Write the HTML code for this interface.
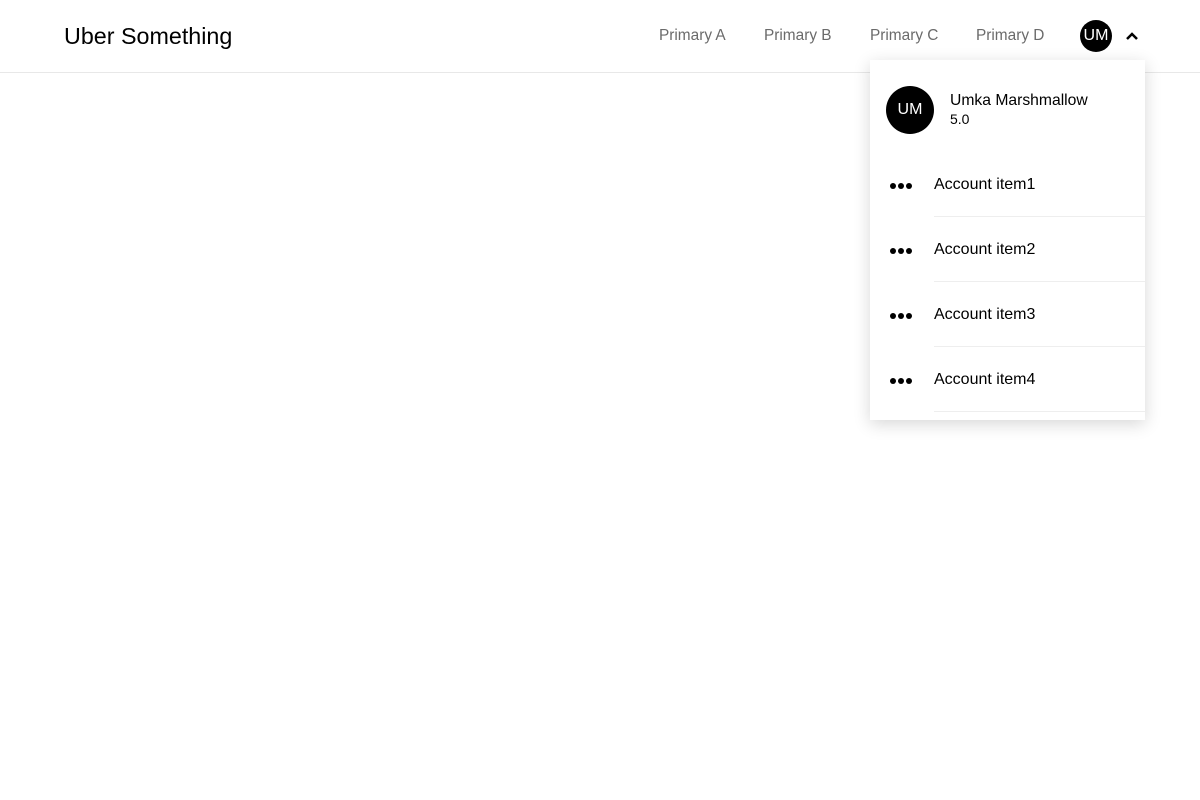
<!DOCTYPE html>
<html><head><style>
*{margin:0;padding:0;box-sizing:border-box}
body{width:1200px;height:800px;background:#fff;font-family:"Liberation Sans",sans-serif;position:relative;overflow:hidden;color:#000}
.hdr{position:absolute;left:0;top:0;width:1200px;height:73px;border-bottom:1px solid #e8e8e8}
.logo{position:absolute;left:64px;top:22px;font-size:23.3px;line-height:28px}
.nav{position:absolute;top:27px;font-size:15.4px;color:#6b6b6b;line-height:18px}
.av{position:absolute;background:#000;color:#fff;border-radius:50%;display:flex;align-items:center;justify-content:center}
.dd{position:absolute;left:870px;top:60px;width:275px;height:360px;background:#fff;box-shadow:0 4px 16px rgba(0,0,0,.16)}
.name{position:absolute;left:80px;top:32px;font-size:15.7px;line-height:18px}
.rate{position:absolute;left:80px;top:51px;font-size:14px;line-height:16px}
.item{position:absolute;left:0;width:275px;height:65px}
.item .t{position:absolute;left:64px;top:24px;font-size:16px;line-height:18px}
.item .ln{position:absolute;left:64px;right:0;bottom:0;height:1px;background:#eee}
.dots{position:absolute;left:20px;top:31px;display:flex;gap:2px}
.dots i{width:6px;height:6px;border-radius:50%;background:#000;display:block}
</style></head><body>
<div class="hdr">
<div class="logo">Uber Something</div>
<div class="nav" style="left:659px">Primary A</div>
<div class="nav" style="left:764px">Primary B</div>
<div class="nav" style="left:870px">Primary C</div>
<div class="nav" style="left:976px">Primary D</div>
<div class="av" style="left:1080px;top:20px;width:32px;height:32px;font-size:16px">UM</div>
<svg style="position:absolute;left:1125px;top:30px" width="14" height="12" viewBox="0 0 14 12"><path d="M2 9 L7 4 L12 9" fill="none" stroke="#000" stroke-width="2.5"/></svg>
</div>
<div class="dd">
<div class="av" style="left:16px;top:26px;width:48px;height:48px;font-size:16px">UM</div>
<div class="name">Umka Marshmallow</div>
<div class="rate">5.0</div>
<div class="item" style="top:92px"><div class="dots"><i></i><i></i><i></i></div><div class="t">Account item1</div><div class="ln"></div></div>
<div class="item" style="top:157px"><div class="dots"><i></i><i></i><i></i></div><div class="t">Account item2</div><div class="ln"></div></div>
<div class="item" style="top:222px"><div class="dots"><i></i><i></i><i></i></div><div class="t">Account item3</div><div class="ln"></div></div>
<div class="item" style="top:287px"><div class="dots"><i></i><i></i><i></i></div><div class="t">Account item4</div><div class="ln"></div></div>
</div>
</body></html>
